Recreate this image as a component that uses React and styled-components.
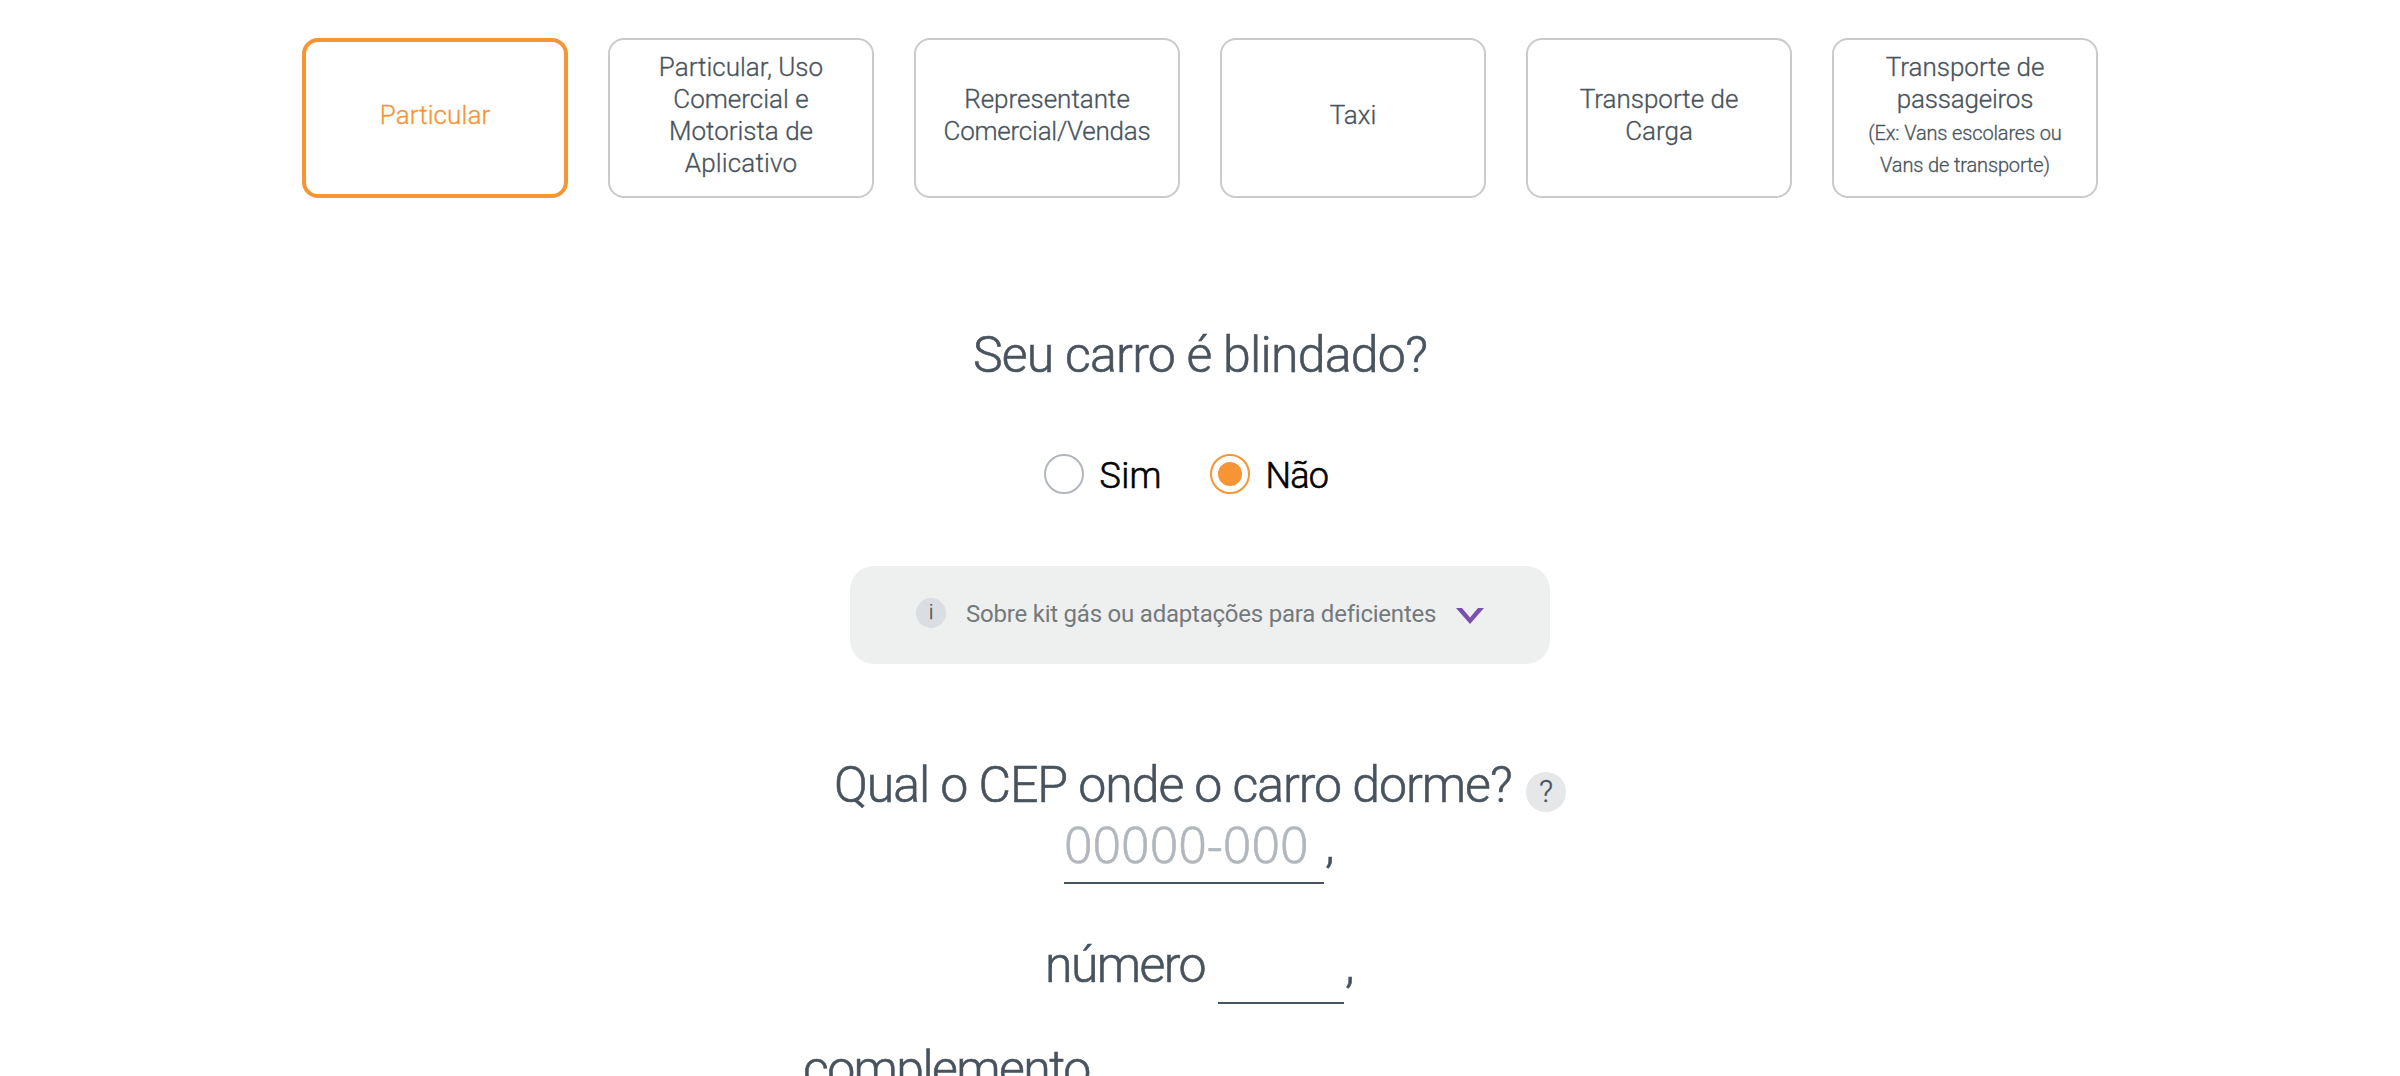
import React from "react";
import styled, { createGlobalStyle } from "styled-components";

const GlobalStyle = createGlobalStyle`
  * { box-sizing: border-box; }
  html, body { margin: 0; background: #fff; }
  body { font-family: Roboto, "Liberation Sans", sans-serif; color: #48535d; }
`;

const Page = styled.main`
  height: 1076px;
  padding-top: 38px;
  overflow: hidden;
  display: flex;
  flex-direction: column;
  align-items: center;

  & > * { flex-shrink: 0; }
`;

const Options = styled.div`
  display: grid;
  grid-template-columns: repeat(6, 266px);
  gap: 40px;
`;

const OptionCard = styled.button`
  height: 160px;
  padding: 0 0 6px;
  display: flex;
  flex-direction: column;
  align-items: center;
  justify-content: center;
  background: #fff;
  border: ${(p) => (p.$active ? "4px solid #f79433" : "2px solid #cacaca")};
  border-radius: 16px;
  color: ${(p) => (p.$active ? "#f79433" : "#48535d")};
  font-family: inherit;
  font-size: 26px;
  font-weight: 300;
  line-height: 32px;
  -webkit-text-stroke: 0.3px currentColor;
`;

const OptionLine = styled.span`
  display: block;
  height: 32px;
  white-space: nowrap;
  letter-spacing: ${(p) => p.$tracking || 0}px;
`;

const OptionNote = styled.small`
  font-size: 20px;
  letter-spacing: -0.14px;
`;

const Heading = styled.h2`
  margin: 127px 0 0;
  font-size: 50px;
  font-weight: 300;
  line-height: 60px;
  letter-spacing: -0.75px;
  white-space: nowrap;
  -webkit-text-stroke: 0.6px currentColor;
`;

const Radios = styled.div`
  margin-top: 69px;
  width: 312px;
  display: flex;
  gap: 50px;
`;

const RadioLabel = styled.label`
  display: flex;
  align-items: center;
  gap: 15.5px;
  width: ${(p) => p.$width}px;
  height: 40px;
  color: #000;
  font-size: 36px;
  font-weight: 300;
  line-height: 40px;
  letter-spacing: ${(p) => p.$tracking}px;
  -webkit-text-stroke: 0.6px currentColor;
`;

const RadioText = styled.span`
  padding-top: 4px;
`;

const RadioMark = styled.span`
  flex: none;
  width: 40px;
  height: 40px;
  display: grid;
  place-items: center;
  border: 2px solid ${(p) => (p.$checked ? "#f79433" : "#b1b7bc")};
  border-radius: 50%;

  &::after {
    content: "";
    width: 24px;
    height: 24px;
    border-radius: 50%;
    background: ${(p) => (p.$checked ? "#f79433" : "transparent")};
  }
`;

const InfoPanel = styled.div`
  margin-top: 72px;
  width: 700px;
  height: 98px;
  padding: 0 66px;
  display: flex;
  align-items: center;
  border-radius: 24px;
  background: #eef0f0;
  color: #74797b;
`;

const InfoBadge = styled.span`
  width: 30px;
  height: 30px;
  margin: 0 20px 4px 0;
  border-radius: 50%;
  background: #dadde1;
  color: #48535d;
  font-size: 21px;
  font-weight: 300;
  line-height: 29px;
  text-align: center;
  -webkit-text-stroke: 0.3px currentColor;
`;

const InfoText = styled.span`
  width: 490px;
  padding-bottom: 2px;
  font-size: 24px;
  line-height: 32px;
  letter-spacing: -0.22px;
  white-space: nowrap;
`;

const Chevron = styled.svg`
  width: 28px;
  height: 16px;
  margin-top: 2px;
`;

const Question = styled.div`
  margin-top: 91px;
  width: 732px;
  height: 60px;
  display: flex;
  justify-content: space-between;
  font-size: 50px;
  font-weight: 300;
  line-height: 60px;
  letter-spacing: -1.04px;
  white-space: nowrap;
  -webkit-text-stroke: 0.6px currentColor;
`;

const HelpBadge = styled.span`
  width: 40px;
  height: 40px;
  margin-top: 17px;
  border-radius: 50%;
  background: #e6e7e9;
  font-size: 31px;
  line-height: 39px;
  letter-spacing: 0;
  text-align: center;
  -webkit-text-stroke: 0.3px currentColor;
`;

const FieldRow = styled.div`
  margin-top: ${(p) => p.$gap || 0}px;
  display: flex;
  height: 69px;
  font-size: 50px;
  font-weight: 300;
  line-height: 60px;
  -webkit-text-stroke: 0.6px currentColor;
`;

const FieldName = styled.label`
  width: ${(p) => p.$width}px;
  padding-left: 1px;
  letter-spacing: -1.6px;
`;

const Field = styled.input`
  width: ${(p) => p.$width}px;
  height: 69px;
  padding: 0 0 9px;
  border: 0;
  border-bottom: 2px solid #48535d;
  border-radius: 0;
  outline: 0;
  background: transparent;
  color: #48535d;
  font: 300 50px/58px "Noto Sans", "Liberation Sans", sans-serif;

  &::placeholder {
    color: #b1b7bc;
    opacity: 1;
    -webkit-text-stroke: 0.6px #b1b7bc;
  }
`;

const Comma = styled.span`
  width: 12px;
  padding-left: 1px;
`;

const options = [
  { lines: [["Particular", 0.1]], active: true },
  { lines: [["Particular, Uso", 0], ["Comercial e", 0], ["Motorista de", 0], ["Aplicativo", 0.15]] },
  { lines: [["Representante", 0], ["Comercial/Vendas", -0.23]] },
  { lines: [["Taxi", 0]] },
  { lines: [["Transporte de", 0], ["Carga", 0]] },
  {
    lines: [["Transporte de", 0], ["passageiros", -0.2]],
    notes: ["(Ex: Vans escolares ou", "Vans de transporte)"],
  },
];

export default function App() {
  return (
    <>
      <GlobalStyle />
      <Page>
        <Options>
          {options.map((option, i) => (
            <OptionCard key={i} $active={option.active}>
              {option.lines.map(([text, tracking]) => (
                <OptionLine key={text} $tracking={tracking}>{text}</OptionLine>
              ))}
              {option.notes?.map((note) => (
                <OptionLine key={note}><OptionNote>{note}</OptionNote></OptionLine>
              ))}
            </OptionCard>
          ))}
        </Options>

        <Heading>Seu carro é blindado?</Heading>
        <Radios>
          <RadioLabel $width={116} $tracking={0.3}>
            <RadioMark /><RadioText>Sim</RadioText>
          </RadioLabel>
          <RadioLabel $width={118} $tracking={-0.8}>
            <RadioMark $checked /><RadioText>Não</RadioText>
          </RadioLabel>
        </Radios>

        <InfoPanel>
          <InfoBadge>i</InfoBadge>
          <InfoText>Sobre kit gás ou adaptações para deficientes</InfoText>
          <Chevron viewBox="0 0 28 16">
            <path d="M0 0h6L14 9.4 22 0H28L14 16z" fill="#7a4fae" />
          </Chevron>
        </InfoPanel>

        <Question>
          <span>Qual o CEP onde o carro dorme?</span>
          <HelpBadge>?</HelpBadge>
        </Question>
        <FieldRow>
          <Field $width={260} placeholder="00000-000" aria-label="CEP" />
          <Comma>,</Comma>
        </FieldRow>
        <FieldRow $gap={51}>
          <FieldName $width={174}>número</FieldName>
          <Field $width={126} />
          <Comma>,</Comma>
        </FieldRow>
        <FieldRow $gap={35}>
          <FieldName $width={296}>complemento</FieldName>
          <Field $width={500} />
        </FieldRow>
      </Page>
    </>
  );
}
